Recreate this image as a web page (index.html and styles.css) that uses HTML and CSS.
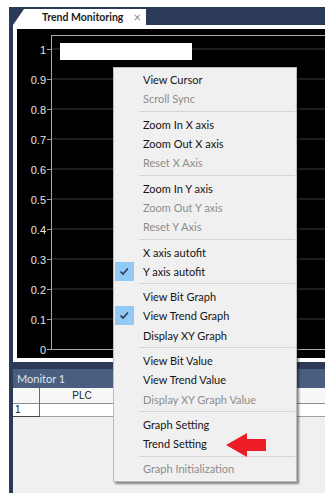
FILE: index.html
```html
<!DOCTYPE html>
<html lang="en">
<head>
  <meta charset="UTF-8">
  <title>Trend Monitoring</title>
  <link rel="stylesheet" href="styles.css">
</head>
<body>
  <div class="window">
    <div class="tabbar">
      <div class="tab">
        <span class="tab-title">Trend Monitoring</span>
        <span class="tab-close">&#215;</span>
      </div>
    </div>

    <div class="chart-frame">
      <div class="chart">
        <svg class="plot" width="308" height="329" viewBox="0 0 308 329">
          <g class="grid-lines">
            <line x1="34" y1="20" x2="308" y2="20"/>
            <line x1="34" y1="50" x2="308" y2="50"/>
            <line x1="34" y1="80" x2="308" y2="80"/>
            <line x1="34" y1="110" x2="308" y2="110"/>
            <line x1="34" y1="140" x2="308" y2="140"/>
            <line x1="34" y1="170" x2="308" y2="170"/>
            <line x1="34" y1="200" x2="308" y2="200"/>
            <line x1="34" y1="230" x2="308" y2="230"/>
            <line x1="34" y1="260" x2="308" y2="260"/>
            <line x1="34" y1="290" x2="308" y2="290"/>
          </g>
          <g class="axis">
            <line x1="34" y1="6.5" x2="308" y2="6.5"/>
            <line x1="34.5" y1="6" x2="34.5" y2="320"/>
            <line x1="34" y1="320.5" x2="308" y2="320.5"/>
            <line x1="30" y1="20.5" x2="34" y2="20.5"/>
            <line x1="30" y1="50.5" x2="34" y2="50.5"/>
            <line x1="30" y1="80.5" x2="34" y2="80.5"/>
            <line x1="30" y1="110.5" x2="34" y2="110.5"/>
            <line x1="30" y1="140.5" x2="34" y2="140.5"/>
            <line x1="30" y1="170.5" x2="34" y2="170.5"/>
            <line x1="30" y1="200.5" x2="34" y2="200.5"/>
            <line x1="30" y1="230.5" x2="34" y2="230.5"/>
            <line x1="30" y1="260.5" x2="34" y2="260.5"/>
            <line x1="30" y1="290.5" x2="34" y2="290.5"/>
            <line x1="30" y1="320.5" x2="34" y2="320.5"/>
          </g>
          <g class="labels">
            <text x="29" y="24.5">1</text>
            <text x="29" y="54.5">0.9</text>
            <text x="29" y="84.5">0.8</text>
            <text x="29" y="114.5">0.7</text>
            <text x="29" y="144.5">0.6</text>
            <text x="29" y="174.5">0.5</text>
            <text x="29" y="204.5">0.4</text>
            <text x="29" y="234.5">0.3</text>
            <text x="29" y="264.5">0.2</text>
            <text x="29" y="294.5">0.1</text>
            <text x="29" y="324.5">0</text>
          </g>
          <rect class="legend" x="43" y="14" width="132" height="17"/>
        </svg>
      </div>
    </div>

    <div class="monitor">
      <div class="monitor-title">Monitor 1</div>
      <table class="monitor-grid">
        <tr class="head-row">
          <th class="num-col"></th>
          <th class="plc-col">PLC</th>
          <th></th>
        </tr>
        <tr class="data-row">
          <td class="num-col">1</td>
          <td class="plc-col"></td>
          <td></td>
        </tr>
      </table>
    </div>
  </div>

  <div class="menu">
    <div class="item"><span class="check"></span><span>View Cursor</span></div>
    <div class="item disabled"><span class="check"></span><span>Scroll Sync</span></div>
    <div class="sep"></div>
    <div class="item"><span class="check"></span><span>Zoom In X axis</span></div>
    <div class="item"><span class="check"></span><span>Zoom Out X axis</span></div>
    <div class="item disabled"><span class="check"></span><span>Reset X Axis</span></div>
    <div class="sep"></div>
    <div class="item"><span class="check"></span><span>Zoom In Y axis</span></div>
    <div class="item disabled"><span class="check"></span><span>Zoom Out Y axis</span></div>
    <div class="item disabled"><span class="check"></span><span>Reset Y Axis</span></div>
    <div class="sep"></div>
    <div class="item"><span class="check"></span><span>X axis autofit</span></div>
    <div class="item"><span class="check on"><svg width="19" height="19" viewBox="0 0 19 19"><path d="M5.5 9.5 L8 12 L13 6.5"/></svg></span><span>Y axis autofit</span></div>
    <div class="sep"></div>
    <div class="item"><span class="check"></span><span>View Bit Graph</span></div>
    <div class="item"><span class="check on"><svg width="19" height="19" viewBox="0 0 19 19"><path d="M5.5 9.5 L8 12 L13 6.5"/></svg></span><span>View Trend Graph</span></div>
    <div class="item"><span class="check"></span><span>Display XY Graph</span></div>
    <div class="sep"></div>
    <div class="item"><span class="check"></span><span>View Bit Value</span></div>
    <div class="item"><span class="check"></span><span>View Trend Value</span></div>
    <div class="item disabled"><span class="check"></span><span>Display XY Graph Value</span></div>
    <div class="sep"></div>
    <div class="item"><span class="check"></span><span>Graph Setting</span></div>
    <div class="item"><span class="check"></span><span>Trend Setting</span></div>
    <div class="sep"></div>
    <div class="item disabled"><span class="check"></span><span>Graph Initialization</span></div>
  </div>

  <svg class="arrow" width="41" height="25" viewBox="0 0 41 25">
    <polygon points="0,12 21,0 21,6 40,6 40,18 21,18 21,24"/>
  </svg>
</body>
</html>
```

FILE: styles.css
```css
body { margin: 0; background: #fff; font-family: Lato, "Liberation Sans", sans-serif; }

.window { margin: 7px 0 0 9px; width: 316px; height: 486px; background: #2b3a56; padding-left: 4px; box-sizing: border-box; display: flex; flex-direction: column; }

.tabbar { height: 18px; flex: none; }
.tab { margin-top: 2px; width: 133px; height: 16px; background: #fff; display: flex; align-items: center; clip-path: polygon(11px 0, 100% 0, 100% 100%, 0 100%); }
.tab-title { margin-left: 29px; font-size: 10.5px; font-weight: bold; color: #1b1b1b; }
.tab-close { margin-left: 10px; font-size: 13px; color: #8a8a8a; }

.chart-frame { background: #fff; padding: 4px 0 4px 4px; flex: none; }
.chart { background: #000; height: 329px; }
.plot { display: block; }
.grid-lines line { stroke: #3b3b3b; stroke-width: 1; }
.axis line { stroke: #a8a8a8; stroke-width: 1; }
.labels text { fill: #e6e6e6; font-family: "Liberation Sans", Arial, sans-serif; font-size: 11px; text-anchor: end; }
.legend { fill: #fff; }

.monitor { margin-top: 7px; flex: 1; background: #f0f0f0; }
.monitor-title { height: 19px; background: #4a5e80; color: #dfe5ee; font-size: 11px; line-height: 19px; padding-left: 4px; }
.monitor-grid { width: 100%; border-collapse: collapse; table-layout: fixed; font-family: "Liberation Sans", Arial, sans-serif; font-size: 10px; }
.monitor-grid th, .monitor-grid td { padding: 0 2px; border-right: 1px solid #6a6a6a; }
.monitor-grid th:last-child, .monitor-grid td:last-child { border-right: none; }
.head-row { height: 15px; background: #f7f7f7; border-bottom: 1px solid #8a8a8a; }
.head-row th { font-weight: normal; color: #222; }
.data-row { height: 13px; background: #fff; border-bottom: 1px solid #a0a0a0; }
.data-row td { color: #111; }
.num-col { width: 22px; text-align: left; }
.plc-col { width: 80px; }
.data-row .num-col { border-bottom: 1px solid #444; }

.menu { position: absolute; left: 113px; top: 67px; width: 184px; box-sizing: border-box; background: #f0f0f0; border: 1px solid #bcbcbc; padding: 2px 1px; box-shadow: 2px 2px 2px rgba(0, 0, 0, 0.45); font-size: 11px; color: #151515; }
.item { height: 19.3px; display: flex; align-items: center; }
.item.disabled { color: #8d8d8d; }
.check { width: 19px; height: 19px; margin-right: 9px; flex: none; }
.check.on { background: #92c9f5; }
.check svg { display: block; }
.check path { fill: none; stroke: #2c3d55; stroke-width: 1.6; }
.sep { height: 1px; margin: 2.5px 0 2.5px 24px; background: #d4d4d4; }

.arrow { position: absolute; left: 226px; top: 433px; }
.arrow polygon { fill: #ee1c25; }
```
